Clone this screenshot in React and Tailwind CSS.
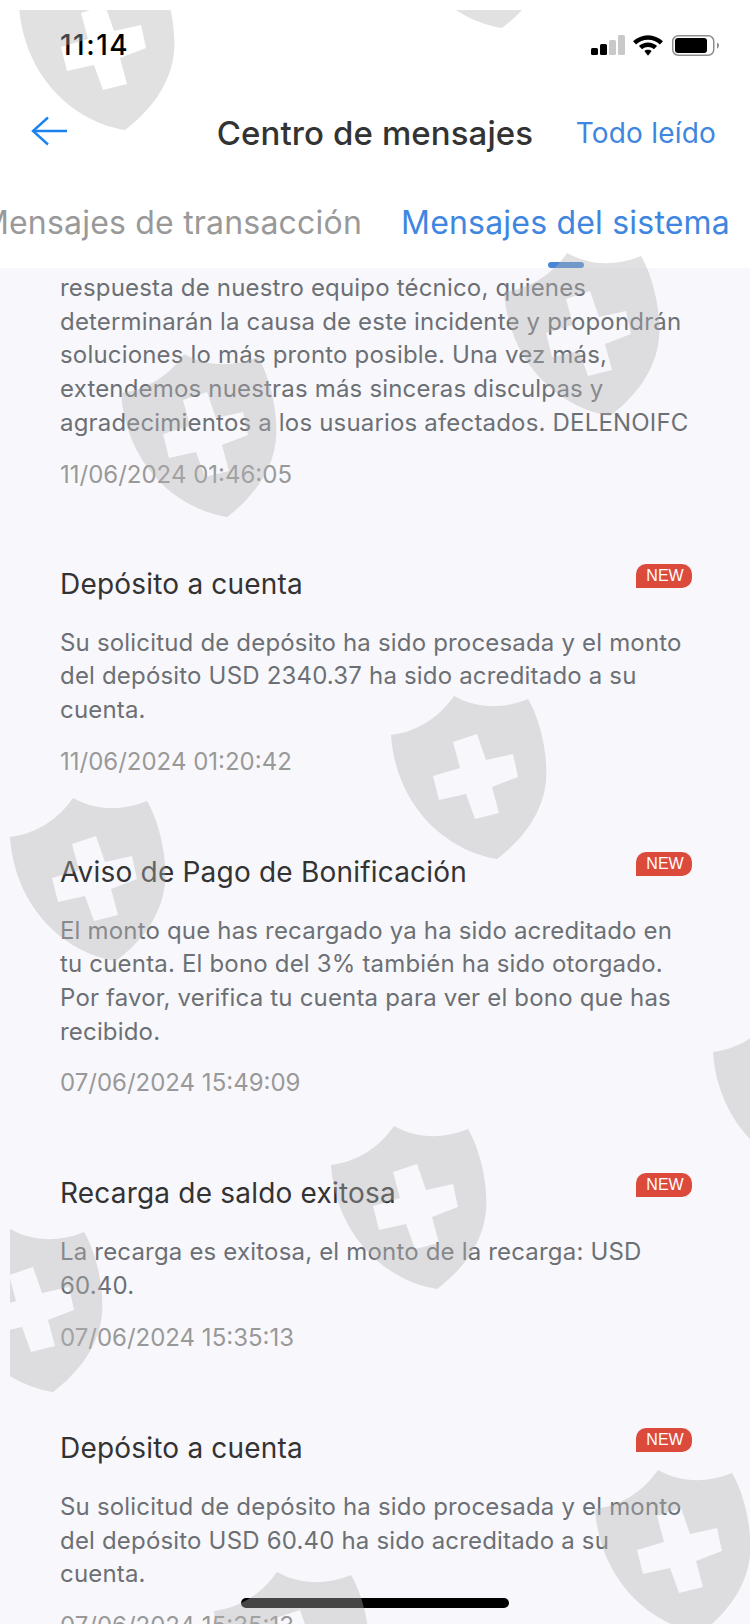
const shields = [
  { x: 9, y: -43 },
  { x: 386, y: -145 },
  { x: 494, y: 243 },
  { x: 111, y: 344 },
  { x: 381, y: 686 },
  { x: 0, y: 788 },
  { x: 703, y: 1003 },
  { x: 321, y: 1116 },
  { x: -63, y: 1219 },
  { x: 585, y: 1460 },
  { x: 204, y: 1562 },
];

const messages = [
  {
    title: "Depósito a cuenta",
    body: "Su solicitud de depósito ha sido procesada y el monto del depósito USD 2340.37 ha sido acreditado a su cuenta.",
    date: "11/06/2024 01:20:42",
  },
  {
    title: "Aviso de Pago de Bonificación",
    body: "El monto que has recargado ya ha sido acreditado en tu cuenta. El bono del 3% también ha sido otorgado. Por favor, verifica tu cuenta para ver el bono que has recibido.",
    date: "07/06/2024 15:49:09",
  },
  {
    title: "Recarga de saldo exitosa",
    body: "La recarga es exitosa, el monto de la recarga: USD 60.40.",
    date: "07/06/2024 15:35:13",
  },
  {
    title: "Depósito a cuenta",
    body: "Su solicitud de depósito ha sido procesada y el monto del depósito USD 60.40 ha sido acreditado a su cuenta.",
    date: "07/06/2024 15:35:13",
  },
];

function Shield({ x, y }) {
  return (
    <svg
      className="absolute"
      style={{ left: x, top: y }}
      width="156"
      height="164"
      viewBox="0 0 156 164"
    >
      <path
        fillRule="evenodd"
        fill="rgba(178,178,178,0.39)"
        d="M0 39C25 36 48 22 63 0C85 12 110 14 137 3C150 25 157 60 155 85C152 118 130 145 106 163C55 155 5 110 0 39ZM62 46L86 38L95 64L122 58L127 81L101 91L108 117L84 123L75 98L48 104L42 80L69 72Z"
      />
    </svg>
  );
}

function Message({ title, body, date }) {
  return (
    <div className="pb-[49px] pl-[60px] pr-[58px] pt-[24px]">
      <div className="flex items-start justify-between">
        <h2 className="text-[28px] leading-[40px] tracking-[0.2px] text-[#333333]">{title}</h2>
        <span className="flex h-[24px] w-[56px] items-center justify-center rounded-t-[10px] rounded-br-[10px] bg-[#dc4a3c] pl-[2px] font-['Liberation_Sans',sans-serif] text-[16px] text-white">
          NEW
        </span>
      </div>
      <p className="mt-[22px] w-[630px] text-[24px] leading-[33.7px] tracking-[0.18px] text-[#6c7075]">{body}</p>
      <p className="mt-[18px] text-[24px] leading-[34px] text-[#999999]">{date}</p>
    </div>
  );
}

export default function App() {
  return (
    <div className="relative h-[1624px] w-[750px] overflow-hidden bg-[#f8f8fc] font-['Inter',sans-serif]">
      <header className="h-[268px] bg-white">
        <div className="flex h-[90px] items-center justify-between pl-[60px] pr-[31px]">
          <span className="text-[28px] font-medium leading-none tracking-[1.5px] text-black">11:14</span>
          <div className="flex items-center gap-[8px]">
            <svg width="34" height="20" viewBox="0 0 34 20">
              <rect x="0" y="13" width="7" height="7" rx="1.5" fill="#000" />
              <rect x="9" y="9" width="7" height="11" rx="1.5" fill="#000" />
              <rect x="18" y="5" width="7" height="15" rx="1.5" fill="#c9c9c9" />
              <rect x="27" y="0" width="7" height="20" rx="1.5" fill="#c9c9c9" />
            </svg>
            <svg width="30" height="21" viewBox="0 0 29 20">
              <path d="M14.5 0C20 0 25 2.2 29 6L26 9C23 6 19 4.4 14.5 4.4S6 6 3 9L0 6C4 2.2 9 0 14.5 0Z" fill="#000" />
              <path d="M14.5 7C17.8 7 20.8 8.3 23.3 10.5L20.2 13.6C18.6 12.2 16.6 11.4 14.5 11.4S10.4 12.2 8.8 13.6L5.7 10.5C8.2 8.3 11.2 7 14.5 7Z" fill="#000" />
              <path d="M14.5 14C15.9 14 17.1 14.5 18 15.4L14.5 20L11 15.4C11.9 14.5 13.1 14 14.5 14Z" fill="#000" />
            </svg>
            <svg className="ml-[1px]" width="47" height="21" viewBox="0 0 47 21">
              <rect x="0.75" y="0.75" width="41" height="19.5" rx="5.5" fill="none" stroke="#8e8e8e" strokeWidth="1.5" />
              <rect x="3" y="3" width="32" height="15" rx="3" fill="#000" />
              <path d="M45 7.5C46.2 8 47 9.2 47 10.5S46.2 13 45 13.5Z" fill="#8e8e8e" />
            </svg>
          </div>
        </div>
        <div className="grid h-[85px] grid-cols-[1fr_auto_1fr] items-center px-[30px]">
          <button className="mb-[4px] justify-self-start">
            <svg className="block" width="40" height="32" viewBox="0 0 40 32" fill="none" stroke="#1b82f1" strokeWidth="2.4">
              <path d="M37 16H3" />
              <path d="M18 2.5L3 16L18 29.5" />
            </svg>
          </button>
          <h1 className="text-[33px] font-medium leading-[44px] tracking-[0.1px] text-[#333333]">
            Centro de mensajes
          </h1>
          <span className="mr-[4px] justify-self-end text-[28px] leading-[40px] tracking-[0.2px] text-[#3f86e0]">Todo leído</span>
        </div>
        <nav className="flex h-[93px] justify-end gap-[39px] overflow-hidden pr-[20px] pt-[26px]">
          <span className="shrink-0 whitespace-nowrap text-[32px] leading-[44px] tracking-[0.2px] text-[#999999]">
            Mensajes de transacción
          </span>
          <div className="flex shrink-0 flex-col items-center">
            <span className="whitespace-nowrap text-[32px] leading-[44px] tracking-[0.2px] text-[#3f86e0]">
              Mensajes del sistema
            </span>
            <span className="mt-[17px] h-[6px] w-[36px] rounded-full bg-[#4a86d8]" />
          </div>
        </nav>
      </header>

      <main className="h-[1356px] overflow-hidden">
        <div className="px-[60px] pb-[48px] pt-[3px]">
          <p className="w-[630px] text-[24px] leading-[33.7px] tracking-[0.18px] text-[#6c7075]">
            respuesta de nuestro equipo técnico, quienes determinarán la causa de este incidente y propondrán soluciones lo más pronto posible. Una vez más, extendemos nuestras más sinceras disculpas y agradecimientos a los usuarios afectados. DELENOIFC
          </p>
          <p className="mt-[18px] text-[24px] leading-[34px] text-[#999999]">11/06/2024 01:46:05</p>
        </div>
        {messages.map((m, i) => (
          <Message key={i} {...m} />
        ))}
      </main>

      <div className="absolute bottom-[16px] left-[241px] h-[10px] w-[268px] rounded-full bg-black" />

      <div className="pointer-events-none absolute inset-0 left-[10px] top-[10px] overflow-hidden">
        {shields.map((s, i) => (
          <Shield key={i} {...s} />
        ))}
      </div>
    </div>
  );
}
